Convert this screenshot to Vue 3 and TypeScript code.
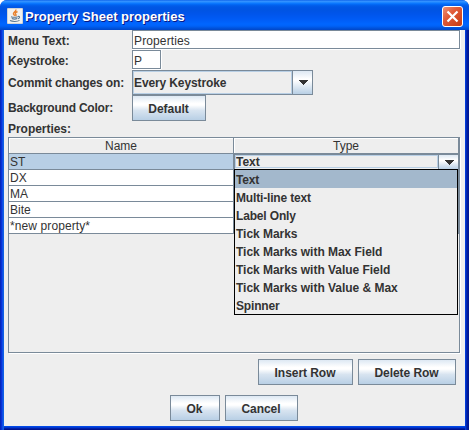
<script setup lang="ts">
import { ref } from 'vue'

const menuText = ref('Properties')
const keystroke = ref('P')
const rows = ['ST', 'DX', 'MA', 'Bite', '*new property*']
const types = [
  'Text',
  'Multi-line text',
  'Label Only',
  'Tick Marks',
  'Tick Marks with Max Field',
  'Tick Marks with Value Field',
  'Tick Marks with Value & Max',
  'Spinner',
]
const selectedType = ref('Text')
</script>

<template>
  <div class="window">
    <header class="titlebar">
      <svg class="java" width="16" height="16" viewBox="0 0 16 16">
        <rect width="16" height="16" rx="1" fill="#d0d3d6" />
        <rect x="1" y="1" width="14" height="14" fill="#f1f1ef" />
        <path d="M8.800 1.500c1 2-3.300 2.800-2.300 4.700l1.300 1.600M10.500 3.500c-2.500 1.200-2.700 2-1.700 3 .5.600.2 1.100-.3 1.500" fill="none" stroke="#e8812c" stroke-width="1.400" />
        <path d="M4 8.700c1.800.700 5 .6 6.800 0M4.800 10.600c1.700.6 3.800.6 5.500 0M3 12.600c2.500 1.200 7.500 1.100 9.500-.2M11 8.500c2-.5 2.300 1.400 0 2.200" fill="none" stroke="#5b7994" stroke-width="1.100" />
      </svg>
      <h1 class="title">Property Sheet properties</h1>
      <button class="close" aria-label="Close">
        <svg width="21" height="21" viewBox="0 0 21 21">
          <defs>
            <linearGradient id="closeFill" x1="0" y1="0" x2="1" y2="1">
              <stop offset="0" stop-color="#ee9478" />
              <stop offset=".4" stop-color="#e05a38" />
              <stop offset="1" stop-color="#c73a10" />
            </linearGradient>
          </defs>
          <rect x=".5" y=".5" width="20" height="20" rx="2.500" fill="url(#closeFill)" stroke="#fff" />
          <path d="M5.500 5.500l10 10M15.500 5.500l-10 10" stroke="#fff" stroke-width="2.200" />
        </svg>
      </button>
    </header>

    <main class="content">
      <div class="row r-menu">
        <label class="label l-menu">Menu Text:</label>
        <div class="field wide"><span class="t-field">{{ menuText }}</span></div>
      </div>
      <div class="row r-key">
        <label class="label l-key">Keystroke:</label>
        <div class="field short"><span>{{ keystroke }}</span></div>
      </div>
      <div class="row r-commit">
        <label class="label l-commit">Commit changes on:</label>
        <div class="combo">
          <div class="combo-value"><span>Every Keystroke</span></div>
          <div class="combo-arrow">
            <svg width="10" height="5" viewBox="0 0 10 5" shape-rendering="crispEdges"><path d="M0 0h10l-5 5z" fill="#333" /></svg>
          </div>
        </div>
      </div>
      <div class="row r-color">
        <label class="label l-color">Background Color:</label>
        <button class="button b-default">Default</button>
      </div>
      <div class="label section">Properties:</div>

      <div class="scrollpane">
        <div class="thead">
          <div class="th name">Name</div>
          <div class="th type">Type</div>
        </div>
        <div v-for="(r, i) in rows" :key="r" class="tr" :class="{ selected: i === 0 }">
          <div class="td name"><span :class="{ 't-new': i === 4 }">{{ r }}</span></div>
          <div class="td type">
            <template v-if="i === 0">
              <div class="cell-combo">
                <div class="cell-value">{{ selectedType }}</div>
                <div class="cell-arrow">
                  <svg width="10" height="5" viewBox="0 0 10 5" shape-rendering="crispEdges"><path d="M0 0h10l-5 5z" fill="#333" /></svg>
                </div>
              </div>
              <ul class="popup">
                <li v-for="t in types" :key="t" :class="{ active: t === selectedType, loose: t.startsWith('Tick Marks') }">{{ t }}</li>
              </ul>
            </template>
          </div>
        </div>
      </div>

      <div class="actions">
        <button class="button b-insert">Insert Row</button>
        <button class="button b-delete">Delete Row</button>
      </div>
      <div class="confirm">
        <button class="button b-ok">Ok</button>
        <button class="button b-cancel">Cancel</button>
      </div>
    </main>
  </div>
</template>

<style>
body {
  background: #fff;
  overflow: hidden;
}
</style>

<style scoped>
* {
  box-sizing: border-box;
}
.window {
  width: 469px;
  height: 430px;
  overflow: hidden;
  display: flex;
  flex-direction: column;
  border-radius: 7px 7px 0 0;
  font: 12px/15px "Liberation Sans", Arial, sans-serif;
  color: #333;
  white-space: nowrap;
  background: linear-gradient(90deg, #001ea0 0, #0831d9 1px, #0831d9 2px, #166aee 3px, #0855dd 4px, #0855dd 465px, #0044e8 465px, #0030c8 466px, #001ea0 467px, #00138c 469px);
}
.titlebar {
  height: 30px;
  flex: none;
  display: flex;
  align-items: flex-start;
  padding: 6px 6px 0 7px;
  background: linear-gradient(180deg, #0058e6 0, #3a93ff 1px, #288eff 2px, #127dff 3px, #036ffc 4px, #0262ee 5px, #0057e5 7px, #0054e3 10px, #0055eb 14px, #005bf5 19px, #0066ff 24px, #0062f8 26px, #0054de 28px, #0046c8 30px);
}
.java {
  margin-top: 2px;
}
.title {
  margin: 3px 0 0 2px;
  flex: 1;
  font: bold 13px/16px "Liberation Sans", Arial, sans-serif;
  color: #fff;
  text-shadow: 1px 1px 0 #0a1883;
}
.close {
  padding: 0;
  border: 0;
  background: none;
  height: 21px;
  width: 21px;
}
.close svg {
  display: block;
}
.content {
  width: 461px;
  height: 396px;
  margin-left: 4px;
  padding: 0 5px 0 4px;
  background: #eee;
  box-shadow: 0 1px #0048e8, 0 2px #0038d0, 0 3px #0020a8, 0 4px #00138c;
}
.row {
  display: flex;
  align-items: center;
}
.r-menu,
.r-key {
  height: 20px;
  align-items: flex-start;
}
.r-commit {
  height: 25px;
}
.r-color {
  height: 26px;
}
.label {
  width: 124px;
  font-weight: bold;
  line-height: 20px;
}
.l-menu {
  line-height: 22px;
  letter-spacing: -0.08px;
}
.l-key {
  line-height: 22px;
  letter-spacing: -0.15px;
}
.l-commit {
  letter-spacing: -0.15px;
}
.l-color {
  line-height: 22px;
  letter-spacing: -0.22px;
}
.field {
  height: 19px;
  border: 1px solid #7a8a99;
  background: #fff;
  box-shadow: 0 1px #fff, 1px 0 #fff;
  padding-left: 1px;
  line-height: 20px;
}
.t-field {
  letter-spacing: 0.13px;
}
.wide {
  width: 328px;
}
.short {
  width: 29px;
}
.combo {
  display: flex;
  width: 181px;
  height: 25px;
  border: 1px solid #7a8a99;
}
.combo-value {
  flex: 1;
  border: 1px solid #b8cfe5;
  font-weight: bold;
  line-height: 22px;
  letter-spacing: -0.12px;
}
.combo-arrow {
  width: 20px;
  border-left: 1px solid #7a8a99;
  display: grid;
  place-items: center;
  background: linear-gradient(#dde8f3 0, #fff 35%, #fff 40%, #b8cfe5 100%);
}
.button {
  height: 26px;
  padding: 1px 1px 0 0;
  border: 1px solid #7a8a99;
  font: bold 12px/24px "Liberation Sans", Arial, sans-serif;
  letter-spacing: -0.05px;
  color: #333;
  text-align: center;
  background: linear-gradient(#dde8f3 0, #fff 30%, #fff 38%, #d8e4f0 60%, #b8cfe5 100%);
}
.b-default {
  width: 74px;
}
.section {
  height: 16px;
  line-height: 17px;
  letter-spacing: -0.04px;
}
.scrollpane {
  width: 452px;
  height: 216px;
  border: 1px solid #7a8a99;
  box-shadow: 1px 1px #fff;
}
.thead {
  display: flex;
  height: 16px;
}
.th {
  text-align: center;
  border-right: 1px solid #7a8a99;
  border-bottom: 1px solid #7a8a99;
  box-shadow: inset 1px 1px #fff;
  line-height: 17px;
}
.name {
  width: 225px;
}
.type {
  width: 225px;
}
.tr {
  display: flex;
  height: 16px;
  background: #fff;
}
.td {
  height: 16px;
  border-right: 1px solid #7a8a99;
  border-bottom: 1px solid #7a8a99;
  padding-left: 1px;
  line-height: 16px;
}
.t-new {
  letter-spacing: 0.1px;
}
.td.type {
  position: relative;
  padding: 0;
}
.selected {
  background: #b8cfe5;
}
.cell-combo {
  display: flex;
  height: 15px;
  border-top: 1px solid #7a8a99;
  border-left: 1px solid #7a8a99;
  background: #eee;
}
.cell-value {
  flex: 1;
  height: 13px;
  overflow: hidden;
  border: 1px solid #b8cfe5;
  font-weight: bold;
  line-height: 13px;
}
.cell-arrow {
  width: 20px;
  border-left: 1px solid #7a8a99;
  display: grid;
  place-items: center;
  background: linear-gradient(#dde8f3 0, #fff 35%, #fff 40%, #b8cfe5 100%);
}
.popup {
  position: absolute;
  z-index: 1;
  top: 15px;
  left: 0;
  width: 224px;
  height: 146px;
  margin: 0;
  padding: 0;
  list-style: none;
  border: 1px solid #000;
  background: #eee;
  font-weight: bold;
  letter-spacing: -0.16px;
}
.popup li {
  height: 18px;
  padding-left: 1px;
  line-height: 20px;
}
.popup .loose {
  letter-spacing: -0.03px;
}
.popup .active {
  background: #a3b8cc;
}
.actions {
  display: flex;
  justify-content: flex-end;
  gap: 5px;
  padding: 6px 4px 0 0;
}
.b-insert {
  width: 95px;
}
.b-delete {
  width: 98px;
}
.confirm {
  display: flex;
  gap: 5px;
  padding: 10px 0 0 162px;
}
.b-ok {
  width: 50px;
}
.b-cancel {
  width: 73px;
}
</style>
